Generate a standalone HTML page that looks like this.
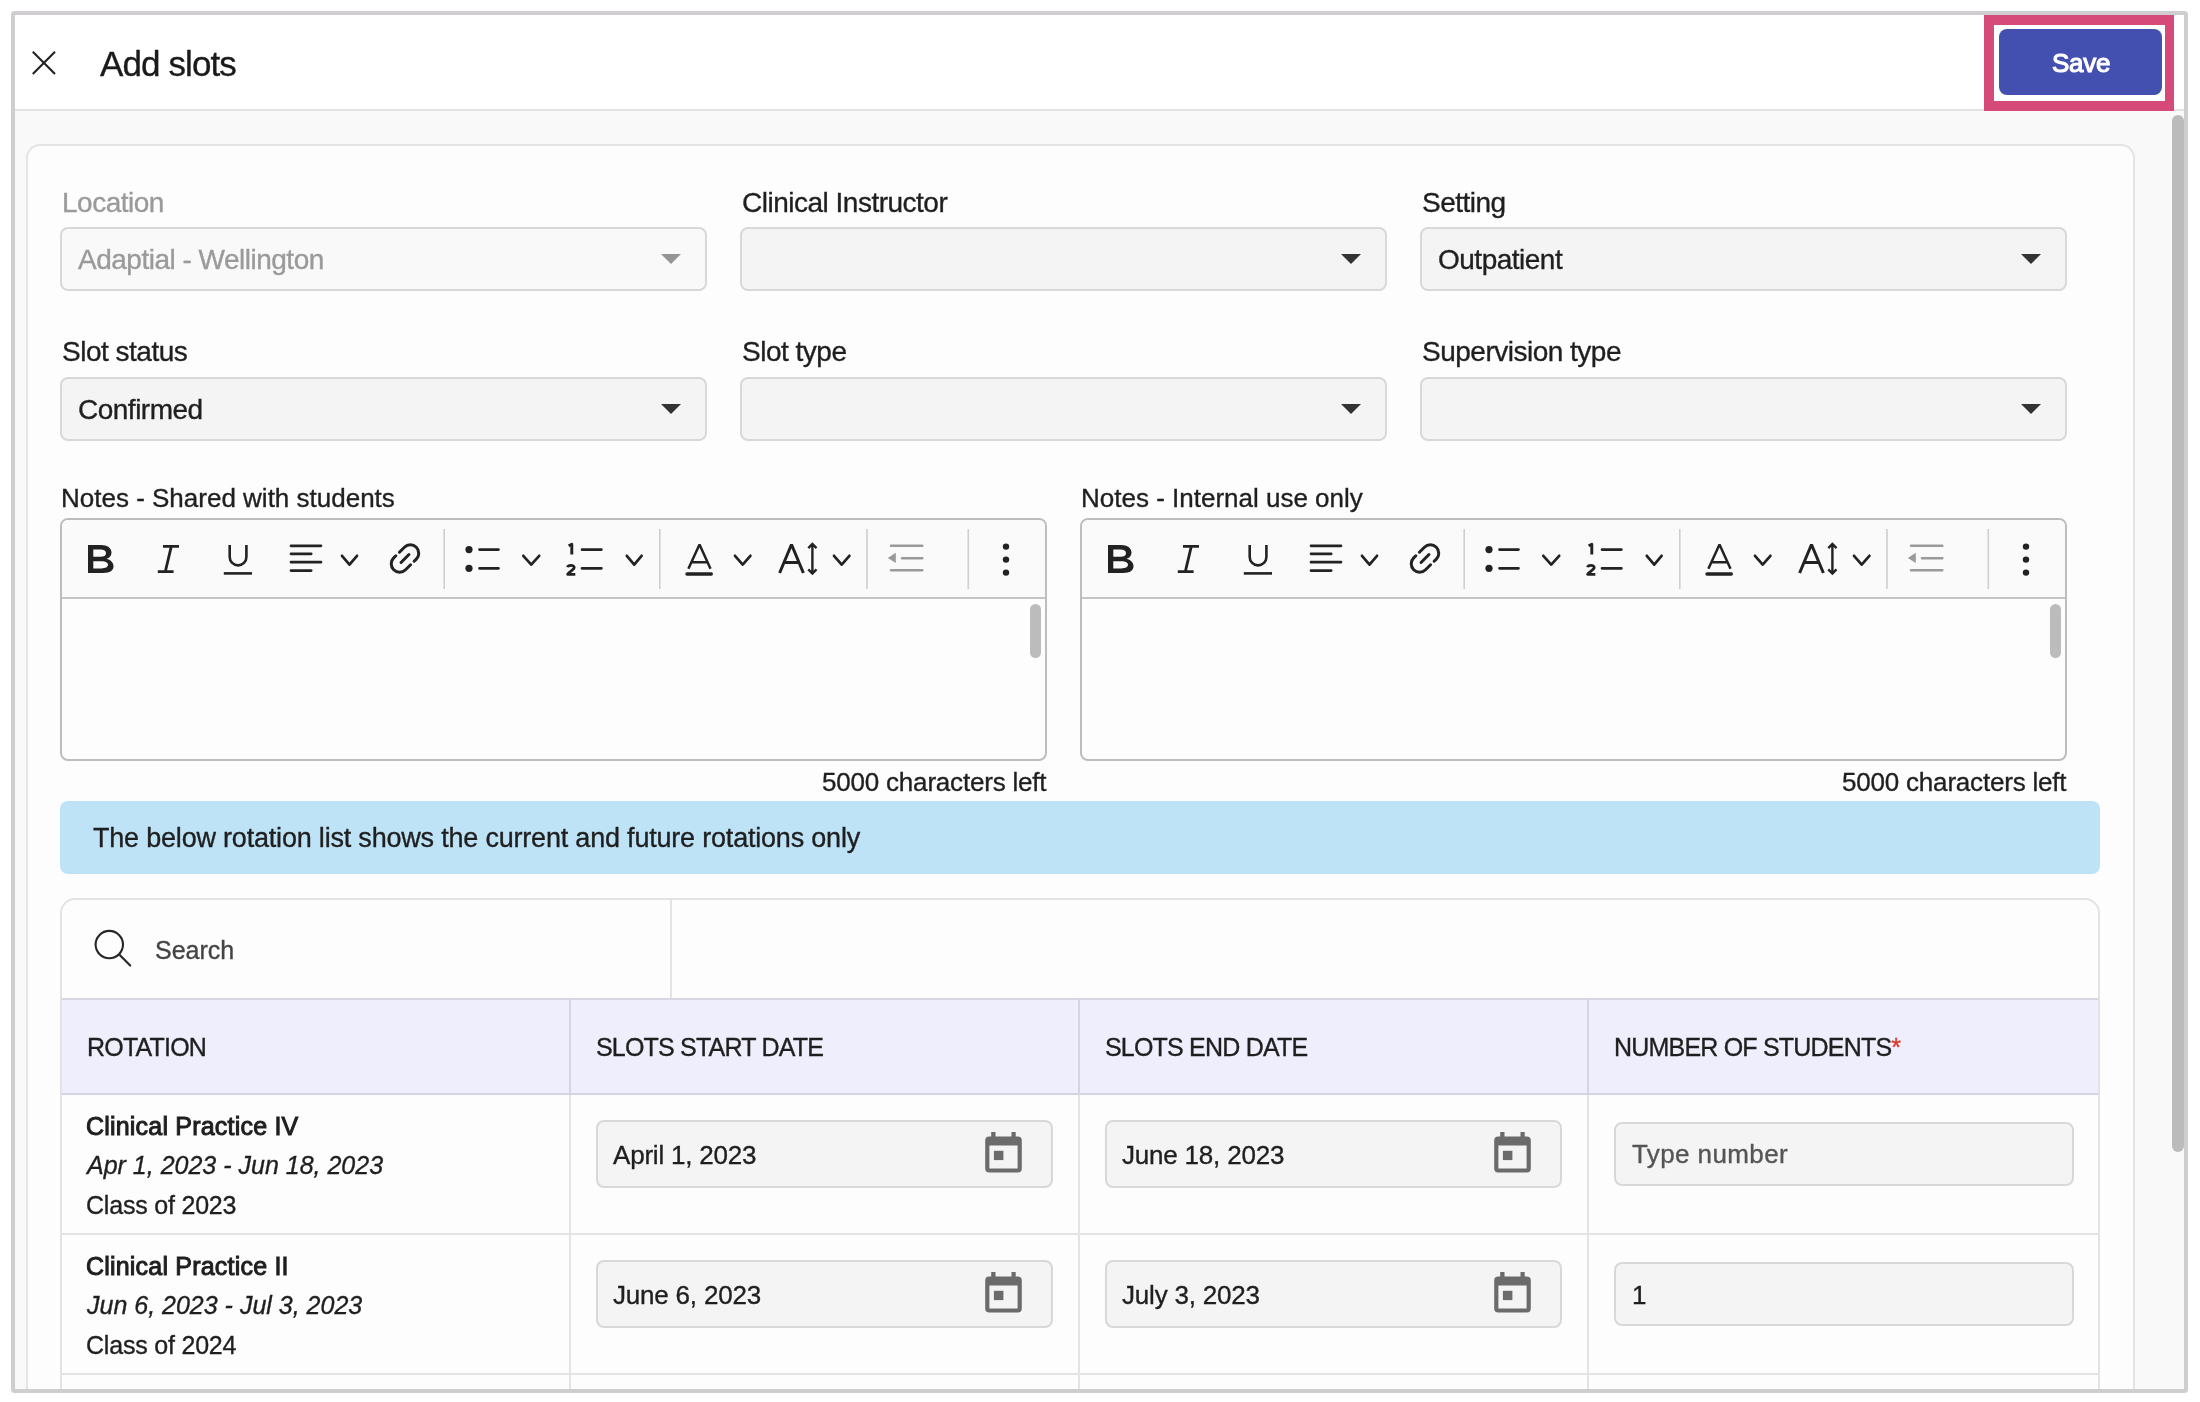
<!DOCTYPE html>
<html><head><meta charset="utf-8">
<style>
*{box-sizing:border-box;margin:0;padding:0}
html,body{width:2200px;height:1402px;overflow:hidden;background:#fff;font-family:"Liberation Sans",sans-serif;color:#1f1f1f}
.t{-webkit-text-stroke:0.35px currentColor;will-change:transform}
.a{position:absolute}
.t{position:absolute;white-space:nowrap;line-height:1}
#frame{left:11px;top:11px;width:2177px;height:1382px;background:#f9f9f9}
#frameb{left:11px;top:11px;width:2177px;height:1382px;border:4px solid #cfcdcf;border-radius:4px}
#hdr{left:15px;top:15px;width:2169px;height:96px;background:#fff;border-bottom:2px solid #e2e2e2}
#pink{left:1984px;top:15px;width:189.5px;height:95.6px;border:solid #d64a7a;border-width:10.7px 9.5px 10px 10px;background:#fff}
#save{left:1999px;top:29px;width:163px;height:66px;background:#4450b0;border-radius:8px}
#sb{left:2172px;top:115px;width:12px;height:1037px;background:#bbb;border-radius:6px}
#card{left:26px;top:144px;width:2109px;height:1400px;border:2px solid #e4e4e4;border-radius:14px;background:#fdfdfd}
.inp{position:absolute;height:64px;width:647px;background:#f4f4f4;border:2px solid #d8d8d8;border-radius:8px}
.inp.dis{background:#f9f9f9}
.tri{position:absolute;width:0;height:0;border-left:10px solid transparent;border-right:10px solid transparent;border-top:10.5px solid #333}
.lbl{font-size:28px;letter-spacing:-0.5px}
.ed{position:absolute;width:987px;height:243px;border:2px solid #bdbdbd;border-radius:8px;background:#fdfdfd;overflow:hidden}
.tb{position:absolute;left:0;top:0;width:100%;height:79px;background:#fafafa;border-bottom:2px solid #c4c4c4}
.esb{position:absolute;width:11px;height:54px;background:#bcbcbc;border-radius:6px}
#banner{left:60px;top:801px;width:2040px;height:72.5px;background:#bee3f7;border-radius:8px}
#tbl{left:60px;top:898px;width:2040px;height:600px;border:2px solid #e3e3e3;border-radius:15px;background:#fdfdfd;overflow:hidden}
.hl{position:absolute;height:2px;background:#e3e3e3}
.vl{position:absolute;width:2px;background:#e3e3e3}
.th{font-size:25px;letter-spacing:-0.8px;color:#1f1f1f}
.di{position:absolute;width:457px;height:68px;background:#f4f4f4;border:2px solid #d8d8d8;border-radius:8px}
.ni{position:absolute;width:460px;height:64px;background:#f4f4f4;border:2px solid #d8d8d8;border-radius:8px}
.dt{font-size:26px;letter-spacing:-0.2px}
.rt{font-size:25px;letter-spacing:-0.2px}
</style></head><body>
<div id="frame" class="a"></div>
<div id="hdr" class="a"></div>
<svg class="a" style="left:30px;top:49px" width="28" height="28" viewBox="0 0 28 28"><path d="M2.8 2.8L25 25M25 2.8L2.8 25" stroke="#222" stroke-width="2.1" fill="none"/></svg>
<div class="t" style="left:100px;top:46.4px;font-size:35px;letter-spacing:-0.9px;color:#1a1a1a">Add slots</div>
<div id="pink" class="a"></div>
<div id="save" class="a"></div>
<div class="t" style="left:2051.5px;top:49.8px;font-size:26px;-webkit-text-stroke:1.1px #fff;color:#fff;letter-spacing:-0.3px">Save</div>
<div id="sb" class="a"></div>
<div id="card" class="a"></div>
<div class="t lbl" style="left:62px;top:189px;color:#9a9a9a">Location</div>
<div class="t lbl" style="left:742px;top:189px">Clinical Instructor</div>
<div class="t lbl" style="left:1422px;top:189px">Setting</div>
<div class="inp dis" style="left:60px;top:227px"></div>
<div class="inp" style="left:740px;top:227px"></div>
<div class="inp" style="left:1420px;top:227px"></div>
<div class="t lbl" style="left:78px;top:246px;color:#9a9a9a">Adaptial - Wellington</div>
<div class="t lbl" style="left:1438px;top:246px">Outpatient</div>
<div class="tri" style="left:660.5px;top:253.7px;border-top-color:#959595"></div>
<div class="tri" style="left:1340.5px;top:253.7px"></div>
<div class="tri" style="left:2020.5px;top:253.7px"></div>
<div class="t lbl" style="left:62px;top:338px">Slot status</div>
<div class="t lbl" style="left:742px;top:338px">Slot type</div>
<div class="t lbl" style="left:1422px;top:338px">Supervision type</div>
<div class="inp" style="left:60px;top:377px"></div>
<div class="inp" style="left:740px;top:377px"></div>
<div class="inp" style="left:1420px;top:377px"></div>
<div class="t lbl" style="left:78px;top:396px">Confirmed</div>
<div class="tri" style="left:660.5px;top:403.7px"></div>
<div class="tri" style="left:1340.5px;top:403.7px"></div>
<div class="tri" style="left:2020.5px;top:403.7px"></div>
<div class="t" style="left:61px;top:485px;font-size:26px">Notes - Shared with students</div>
<div class="t" style="left:1081px;top:485px;font-size:26px">Notes - Internal use only</div>
<div class="ed" style="left:60px;top:518px"><div class="tb"></div><div class="esb" style="left:967.7px;top:84px"></div></div>
<svg class="a" style="left:61px;top:519px" width="986" height="79" viewBox="0 0 986 79" fill="none" stroke="#222" stroke-linecap="round"><path fill="#222" stroke="none" fill-rule="evenodd" d="M27,26 H40 C46.5,26 50.5,29 50.5,33.5 C50.5,36.8 48.5,39 45.5,39.8 C49.5,40.6 52.5,43.5 52.5,47.3 C52.5,51.5 49,54 42,54 H27 Z M32.3,30.6 V37.8 H39.5 C43,37.8 45,36.5 45,34.2 C45,31.9 43,30.6 39.5,30.6 Z M32.3,42.2 V49.4 H40.5 C44.5,49.4 47,48 47,45.8 C47,43.6 44.5,42.2 40.5,42.2 Z"/><path stroke-width="2.8" stroke-linecap="butt" d="M102,27.4 H118 M96.8,52.6 H112.6 M110.3,27.4 L104.3,52.6"/><path stroke-width="2.6" stroke-linecap="butt" d="M168.7,26 V38 A8.35,8.35 0 0 0 185.4,38 V26"/><path stroke-width="2.6" stroke-linecap="butt" d="M162.8,54.4 H191"/><path stroke-width="2.7" d="M230,26.8 H260 M230,34.8 H250.2 M230,43.2 H260 M230,51.6 H250.2"/><path stroke-width="2.7" stroke-linecap="round" stroke-linejoin="round" d="M281.0,36.8 L288.5,45.6 L296.0,36.8"/><g transform="translate(344,39.5) rotate(-45)" stroke-width="3" stroke-linecap="round"><path d="M0.5,-8.4 H7.6 A8.4,8.4 0 0 1 7.6,8.4 H4.5"/><path d="M-0.5,8.4 H-7.6 A8.4,8.4 0 0 1 -7.6,-8.4 H-4.5"/><path d="M-5.6,0 H5.6"/></g><path stroke="#cfcfcf" stroke-width="1.6" stroke-linecap="butt" d="M383.2,10 V70"/><path stroke="#cfcfcf" stroke-width="1.6" stroke-linecap="butt" d="M598.8,10 V70"/><path stroke="#cfcfcf" stroke-width="1.6" stroke-linecap="butt" d="M806.0,10 V70"/><path stroke="#cfcfcf" stroke-width="1.6" stroke-linecap="butt" d="M907.3,10 V70"/><circle cx="408" cy="30.6" r="3.6" fill="#222" stroke="none"/><circle cx="408" cy="49.3" r="3.6" fill="#222" stroke="none"/><path stroke-width="2.7" d="M418.5,30.6 H437.5 M418.5,49.3 H437.5"/><path stroke-width="2.7" stroke-linecap="round" stroke-linejoin="round" d="M462.3,36.8 L470.25,45.6 L478.2,36.8"/><path stroke-width="2.9" stroke-linecap="butt" stroke-linejoin="round" d="M507.6,26.8 L510.8,25.3 V35.5"/><path stroke-width="2.8" stroke-linecap="butt" stroke-linejoin="round" d="M506.6,48.3 C507,45.9 513.2,45.5 513.2,48.6 C513.2,51 508,52.6 506.6,55.3 H514.3"/><path stroke-width="2.7" d="M521,30.6 H540.4 M521,49.3 H540.4"/><path stroke-width="2.7" stroke-linecap="round" stroke-linejoin="round" d="M565.8,36.8 L573.2,45.6 L580.6,36.8"/><path stroke-width="2.5" stroke-linecap="butt" stroke-linejoin="bevel" d="M627.4,49.7 L638.5,25.5 L649.5,49.7 M631.3,43.2 H645.7"/><path stroke-width="3.4" d="M626,55 H650.3"/><path stroke-width="2.7" stroke-linecap="round" stroke-linejoin="round" d="M674.0,36.8 L681.7,45.6 L689.4000000000001,36.8"/><path stroke-width="3" stroke-linecap="butt" stroke-linejoin="bevel" d="M718.6,54 L730.5,25.5 L742.4,54 M722.8,43.5 H738.2"/><path stroke-width="2.4" stroke-linecap="butt" d="M751.4,25.5 V54 M747.3,29.2 L751.4,25 L755.5,29.2 M747.3,50.3 L751.4,54.5 L755.5,50.3"/><path stroke-width="2.7" stroke-linecap="round" stroke-linejoin="round" d="M773.0,36.8 L780.7,45.6 L788.4000000000001,36.8"/><path stroke="#9a9a9a" stroke-width="2.5" d="M830,26.7 H861.3 M841,39.2 H861.3 M830,51.3 H861.3"/><path fill="#9a9a9a" stroke="none" d="M826.8,39 L834.8,33.7 V44.1 Z"/><circle cx="945" cy="27.6" r="3.2" fill="#222" stroke="none"/><circle cx="945" cy="40.6" r="3.2" fill="#222" stroke="none"/><circle cx="945" cy="53.6" r="3.2" fill="#222" stroke="none"/></svg>
<div class="ed" style="left:1080px;top:518px"><div class="tb"></div><div class="esb" style="left:967.7px;top:84px"></div></div>
<svg class="a" style="left:1081px;top:519px" width="986" height="79" viewBox="0 0 986 79" fill="none" stroke="#222" stroke-linecap="round"><path fill="#222" stroke="none" fill-rule="evenodd" d="M27,26 H40 C46.5,26 50.5,29 50.5,33.5 C50.5,36.8 48.5,39 45.5,39.8 C49.5,40.6 52.5,43.5 52.5,47.3 C52.5,51.5 49,54 42,54 H27 Z M32.3,30.6 V37.8 H39.5 C43,37.8 45,36.5 45,34.2 C45,31.9 43,30.6 39.5,30.6 Z M32.3,42.2 V49.4 H40.5 C44.5,49.4 47,48 47,45.8 C47,43.6 44.5,42.2 40.5,42.2 Z"/><path stroke-width="2.8" stroke-linecap="butt" d="M102,27.4 H118 M96.8,52.6 H112.6 M110.3,27.4 L104.3,52.6"/><path stroke-width="2.6" stroke-linecap="butt" d="M168.7,26 V38 A8.35,8.35 0 0 0 185.4,38 V26"/><path stroke-width="2.6" stroke-linecap="butt" d="M162.8,54.4 H191"/><path stroke-width="2.7" d="M230,26.8 H260 M230,34.8 H250.2 M230,43.2 H260 M230,51.6 H250.2"/><path stroke-width="2.7" stroke-linecap="round" stroke-linejoin="round" d="M281.0,36.8 L288.5,45.6 L296.0,36.8"/><g transform="translate(344,39.5) rotate(-45)" stroke-width="3" stroke-linecap="round"><path d="M0.5,-8.4 H7.6 A8.4,8.4 0 0 1 7.6,8.4 H4.5"/><path d="M-0.5,8.4 H-7.6 A8.4,8.4 0 0 1 -7.6,-8.4 H-4.5"/><path d="M-5.6,0 H5.6"/></g><path stroke="#cfcfcf" stroke-width="1.6" stroke-linecap="butt" d="M383.2,10 V70"/><path stroke="#cfcfcf" stroke-width="1.6" stroke-linecap="butt" d="M598.8,10 V70"/><path stroke="#cfcfcf" stroke-width="1.6" stroke-linecap="butt" d="M806.0,10 V70"/><path stroke="#cfcfcf" stroke-width="1.6" stroke-linecap="butt" d="M907.3,10 V70"/><circle cx="408" cy="30.6" r="3.6" fill="#222" stroke="none"/><circle cx="408" cy="49.3" r="3.6" fill="#222" stroke="none"/><path stroke-width="2.7" d="M418.5,30.6 H437.5 M418.5,49.3 H437.5"/><path stroke-width="2.7" stroke-linecap="round" stroke-linejoin="round" d="M462.3,36.8 L470.25,45.6 L478.2,36.8"/><path stroke-width="2.9" stroke-linecap="butt" stroke-linejoin="round" d="M507.6,26.8 L510.8,25.3 V35.5"/><path stroke-width="2.8" stroke-linecap="butt" stroke-linejoin="round" d="M506.6,48.3 C507,45.9 513.2,45.5 513.2,48.6 C513.2,51 508,52.6 506.6,55.3 H514.3"/><path stroke-width="2.7" d="M521,30.6 H540.4 M521,49.3 H540.4"/><path stroke-width="2.7" stroke-linecap="round" stroke-linejoin="round" d="M565.8,36.8 L573.2,45.6 L580.6,36.8"/><path stroke-width="2.5" stroke-linecap="butt" stroke-linejoin="bevel" d="M627.4,49.7 L638.5,25.5 L649.5,49.7 M631.3,43.2 H645.7"/><path stroke-width="3.4" d="M626,55 H650.3"/><path stroke-width="2.7" stroke-linecap="round" stroke-linejoin="round" d="M674.0,36.8 L681.7,45.6 L689.4000000000001,36.8"/><path stroke-width="3" stroke-linecap="butt" stroke-linejoin="bevel" d="M718.6,54 L730.5,25.5 L742.4,54 M722.8,43.5 H738.2"/><path stroke-width="2.4" stroke-linecap="butt" d="M751.4,25.5 V54 M747.3,29.2 L751.4,25 L755.5,29.2 M747.3,50.3 L751.4,54.5 L755.5,50.3"/><path stroke-width="2.7" stroke-linecap="round" stroke-linejoin="round" d="M773.0,36.8 L780.7,45.6 L788.4000000000001,36.8"/><path stroke="#9a9a9a" stroke-width="2.5" d="M830,26.7 H861.3 M841,39.2 H861.3 M830,51.3 H861.3"/><path fill="#9a9a9a" stroke="none" d="M826.8,39 L834.8,33.7 V44.1 Z"/><circle cx="945" cy="27.6" r="3.2" fill="#222" stroke="none"/><circle cx="945" cy="40.6" r="3.2" fill="#222" stroke="none"/><circle cx="945" cy="53.6" r="3.2" fill="#222" stroke="none"/></svg>
<div class="t" style="left:821.5px;top:769px;font-size:26px;letter-spacing:-0.2px">5000 characters left</div>
<div class="t" style="left:1841.5px;top:769px;font-size:26px;letter-spacing:-0.2px">5000 characters left</div>
<div id="banner" class="a"></div>
<div class="t" style="left:93px;top:825px;font-size:27px;letter-spacing:-0.2px">The below rotation list shows the current and future rotations only</div>
<div id="tbl" class="a"></div>
<svg class="a" style="left:90px;top:925px" width="46" height="46" viewBox="0 0 46 46" fill="none" stroke="#262626" stroke-width="2.1"><circle cx="19.3" cy="19.6" r="13.7"/><path d="M29.5,29.8 L40.2,40.6" stroke-linecap="round"/></svg>
<div class="t" style="left:155px;top:938px;font-size:25px;color:#444">Search</div>
<div class="vl" style="left:669.5px;top:899px;height:99px"></div>
<div class="a" style="left:62px;top:998px;width:2036px;height:97px;background:#efeefc;border-top:2px solid #d6d5e3;border-bottom:2px solid #d5d4e0"></div>
<div class="vl" style="left:569px;top:998px;height:97px;background:#d5d4e2"></div>
<div class="vl" style="left:569px;top:1095px;height:300px;background:#e3e3e3"></div>
<div class="vl" style="left:1078px;top:998px;height:97px;background:#d5d4e2"></div>
<div class="vl" style="left:1078px;top:1095px;height:300px;background:#e3e3e3"></div>
<div class="vl" style="left:1587px;top:998px;height:97px;background:#d5d4e2"></div>
<div class="vl" style="left:1587px;top:1095px;height:300px;background:#e3e3e3"></div>
<div class="t th" style="left:87px;top:1035px">ROTATION</div>
<div class="t th" style="left:596px;top:1035px">SLOTS START DATE</div>
<div class="t th" style="left:1105px;top:1035px">SLOTS END DATE</div>
<div class="t th" style="left:1614px;top:1035px">NUMBER OF STUDENTS<span style="color:#d9362b">*</span></div>
<div class="hl" style="left:62px;top:1233px;width:2036px"></div>
<div class="hl" style="left:62px;top:1373px;width:2036px"></div>
<div class="t rt" style="left:86px;top:1114px;-webkit-text-stroke:1px currentColor;letter-spacing:0.2px">Clinical Practice IV</div>
<div class="t rt" style="left:87px;top:1153px;font-style:italic;letter-spacing:0px">Apr 1, 2023 - Jun 18, 2023</div>
<div class="t rt" style="left:86px;top:1193px">Class of 2023</div>
<div class="di" style="left:596px;top:1120px"></div>
<div class="di" style="left:1105px;top:1120px"></div>
<div class="t dt" style="left:613px;top:1142px">April 1, 2023</div>
<div class="t dt" style="left:1122px;top:1142px">June 18, 2023</div>
<svg class="a" style="left:984.5px;top:1131.5px" width="38" height="42" viewBox="0 0 38 42"><path fill="#6b6b6b" fill-rule="evenodd" d="M4.2,4.5 H6.2 V0 H10.5 V4.5 H26.5 V0 H30.7 V4.5 H32.8 A4,4 0 0 1 36.8,8.5 V36.4 A4,4 0 0 1 32.8,40.4 H4.2 A4,4 0 0 1 0.2,36.4 V8.5 A4,4 0 0 1 4.2,4.5 Z M4.4,13.5 V36.6 H32.6 V13.5 Z"/><rect x="8.9" y="18.8" width="9.5" height="9.3" fill="#6b6b6b"/></svg>
<svg class="a" style="left:1493.5px;top:1131.5px" width="38" height="42" viewBox="0 0 38 42"><path fill="#6b6b6b" fill-rule="evenodd" d="M4.2,4.5 H6.2 V0 H10.5 V4.5 H26.5 V0 H30.7 V4.5 H32.8 A4,4 0 0 1 36.8,8.5 V36.4 A4,4 0 0 1 32.8,40.4 H4.2 A4,4 0 0 1 0.2,36.4 V8.5 A4,4 0 0 1 4.2,4.5 Z M4.4,13.5 V36.6 H32.6 V13.5 Z"/><rect x="8.9" y="18.8" width="9.5" height="9.3" fill="#6b6b6b"/></svg>
<div class="ni" style="left:1614px;top:1122px"></div>
<div class="t dt" style="left:1632px;top:1142px;color:#555;letter-spacing:0.4px;margin-top:-1.5px">Type number</div>
<div class="t rt" style="left:86px;top:1254px;-webkit-text-stroke:1px currentColor;letter-spacing:0.2px">Clinical Practice II</div>
<div class="t rt" style="left:87px;top:1293px;font-style:italic;letter-spacing:0px">Jun 6, 2023 - Jul 3, 2023</div>
<div class="t rt" style="left:86px;top:1333px">Class of 2024</div>
<div class="di" style="left:596px;top:1260px"></div>
<div class="di" style="left:1105px;top:1260px"></div>
<div class="t dt" style="left:613px;top:1282px">June 6, 2023</div>
<div class="t dt" style="left:1122px;top:1282px">July 3, 2023</div>
<svg class="a" style="left:984.5px;top:1271.5px" width="38" height="42" viewBox="0 0 38 42"><path fill="#6b6b6b" fill-rule="evenodd" d="M4.2,4.5 H6.2 V0 H10.5 V4.5 H26.5 V0 H30.7 V4.5 H32.8 A4,4 0 0 1 36.8,8.5 V36.4 A4,4 0 0 1 32.8,40.4 H4.2 A4,4 0 0 1 0.2,36.4 V8.5 A4,4 0 0 1 4.2,4.5 Z M4.4,13.5 V36.6 H32.6 V13.5 Z"/><rect x="8.9" y="18.8" width="9.5" height="9.3" fill="#6b6b6b"/></svg>
<svg class="a" style="left:1493.5px;top:1271.5px" width="38" height="42" viewBox="0 0 38 42"><path fill="#6b6b6b" fill-rule="evenodd" d="M4.2,4.5 H6.2 V0 H10.5 V4.5 H26.5 V0 H30.7 V4.5 H32.8 A4,4 0 0 1 36.8,8.5 V36.4 A4,4 0 0 1 32.8,40.4 H4.2 A4,4 0 0 1 0.2,36.4 V8.5 A4,4 0 0 1 4.2,4.5 Z M4.4,13.5 V36.6 H32.6 V13.5 Z"/><rect x="8.9" y="18.8" width="9.5" height="9.3" fill="#6b6b6b"/></svg>
<div class="ni" style="left:1614px;top:1262px"></div>
<div class="t dt" style="left:1632px;top:1282px;color:#1f1f1f;letter-spacing:0;margin-top:0">1</div>
<div class="a" style="left:0;top:1393px;width:2200px;height:9px;background:#fff"></div>
<div class="a" style="left:2188px;top:0;width:12px;height:1402px;background:#fff"></div>
<div id="frameb" class="a"></div>
</body></html>
